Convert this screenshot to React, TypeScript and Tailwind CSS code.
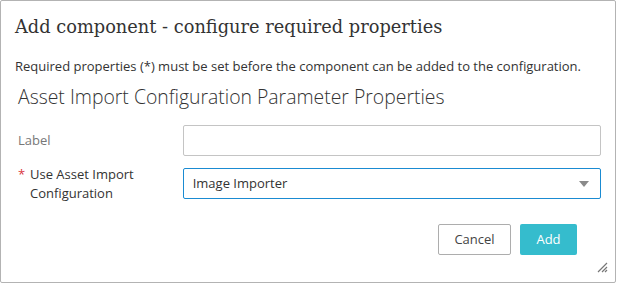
export default function App() {
  return (
    <div className="w-[618px] h-[284px] bg-white" style={{ fontFamily: '"Open Sans", sans-serif' }}>
      <div className="relative w-[616px] h-[283px] border border-[#b3b3b3] rounded-[2px] flex flex-col px-[14px]">
        <h1 className="mt-[12px] text-[17.8px] leading-[28px] text-[#333]" style={{ fontFamily: '"DejaVu Serif", serif' }}>
          Add component - configure required properties
        </h1>
        <p className="mt-[16px] text-[13px] leading-[18px] text-[#333]">
          Required properties (*) must be set before the component can be added to the configuration.
        </p>
        <h2 className="mt-[9px] ml-[3px] text-[19.4px] leading-[26px] text-[#333] font-light">
          Asset Import Configuration Parameter Properties
        </h2>
        <div className="mt-[15px] ml-[3px] flex flex-col gap-[12px]">
          <div className="flex items-center">
            <label className="w-[165px] text-[13px] text-[#777]">Label</label>
            <input className="w-[419px] h-[31px] border border-[#c4c4c4] rounded-[2px] outline-none px-[10px] text-[13px]" />
          </div>
          <div className="flex items-start">
            <div className="w-[165px] -mt-[3px] flex text-[13px] leading-[19px] text-[#333]">
              <span className="w-[12px] text-[#d9363e]">*</span>
              <span>Use Asset Import<br />Configuration</span>
            </div>
            <div className="w-[419px] h-[31px] border border-[#1a8bd2] rounded-[2px] flex items-center justify-between pl-[9px] pr-[11px] text-[13px] text-[#333]">
              <span>Image Importer</span>
              <svg width="10" height="6" viewBox="0 0 10 6"><path d="M0 0h10L5 6z" fill="#8a8a8a" /></svg>
            </div>
          </div>
        </div>
        <div className="mt-[21px] flex justify-end gap-[9px] pr-[24px]">
          <button className="w-[73px] h-[31px] border border-[#adadad] rounded-[2px] bg-white text-[13px] text-[#444]">Cancel</button>
          <button className="w-[57px] h-[31px] rounded-[2px] bg-[#35bccd] text-[13px] text-white">Add</button>
        </div>
        <svg className="absolute right-[7px] bottom-[9px]" width="12" height="12" viewBox="0 0 12 12">
          <path d="M11 2L2 11M11 6L6 11M11 9L9 11" stroke="#777" strokeWidth="1.2" />
        </svg>
      </div>
    </div>
  );
}
